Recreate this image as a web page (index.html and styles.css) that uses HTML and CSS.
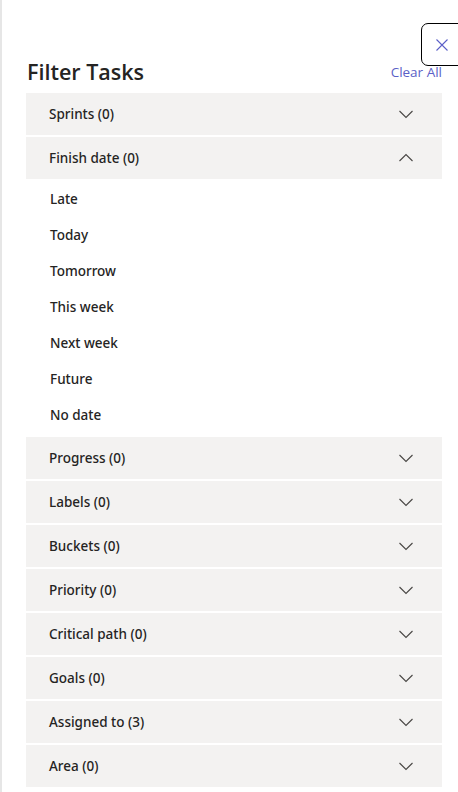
FILE: index.html
```html
<!DOCTYPE html>
<html lang="en">
<head>
<meta charset="utf-8">
<title>Filter Tasks</title>
<link rel="stylesheet" href="styles.css">
</head>
<body>
<div class="panel">
  <button class="close" aria-label="Close">
    <svg width="14" height="14" viewBox="0 0 14 14"><path d="M1.5 1.5 L12.5 12.5 M12.5 1.5 L1.5 12.5" stroke="#5b5fc7" stroke-width="1.1" fill="none"/></svg>
  </button>
  <div class="title-row">
    <h1 class="title">Filter Tasks</h1>
    <a class="clear" href="#">Clear All</a>
  </div>
  <div class="accordion">
    <div class="section">
      <div class="header"><span>Sprints (0)</span><svg class="chev" width="16" height="16" viewBox="0 0 16 16"><path d="M1.5 5 L8 11.5 L14.5 5" stroke="#484644" stroke-width="1.1" fill="none"/></svg></div>
    </div>
    <div class="section open">
      <div class="header"><span>Finish date (0)</span><svg class="chev" width="16" height="16" viewBox="0 0 16 16"><path d="M1.5 11 L8 4.5 L14.5 11" stroke="#484644" stroke-width="1.1" fill="none"/></svg></div>
      <ul class="options">
        <li>Late</li>
        <li>Today</li>
        <li>Tomorrow</li>
        <li>This week</li>
        <li>Next week</li>
        <li>Future</li>
        <li>No date</li>
      </ul>
    </div>
    <div class="section"><div class="header"><span>Progress (0)</span><svg class="chev" width="16" height="16" viewBox="0 0 16 16"><path d="M1.5 5 L8 11.5 L14.5 5" stroke="#484644" stroke-width="1.1" fill="none"/></svg></div></div>
    <div class="section"><div class="header"><span>Labels (0)</span><svg class="chev" width="16" height="16" viewBox="0 0 16 16"><path d="M1.5 5 L8 11.5 L14.5 5" stroke="#484644" stroke-width="1.1" fill="none"/></svg></div></div>
    <div class="section"><div class="header"><span>Buckets (0)</span><svg class="chev" width="16" height="16" viewBox="0 0 16 16"><path d="M1.5 5 L8 11.5 L14.5 5" stroke="#484644" stroke-width="1.1" fill="none"/></svg></div></div>
    <div class="section"><div class="header"><span>Priority (0)</span><svg class="chev" width="16" height="16" viewBox="0 0 16 16"><path d="M1.5 5 L8 11.5 L14.5 5" stroke="#484644" stroke-width="1.1" fill="none"/></svg></div></div>
    <div class="section"><div class="header"><span>Critical path (0)</span><svg class="chev" width="16" height="16" viewBox="0 0 16 16"><path d="M1.5 5 L8 11.5 L14.5 5" stroke="#484644" stroke-width="1.1" fill="none"/></svg></div></div>
    <div class="section"><div class="header"><span>Goals (0)</span><svg class="chev" width="16" height="16" viewBox="0 0 16 16"><path d="M1.5 5 L8 11.5 L14.5 5" stroke="#484644" stroke-width="1.1" fill="none"/></svg></div></div>
    <div class="section"><div class="header"><span>Assigned to (3)</span><svg class="chev" width="16" height="16" viewBox="0 0 16 16"><path d="M1.5 5 L8 11.5 L14.5 5" stroke="#484644" stroke-width="1.1" fill="none"/></svg></div></div>
    <div class="section"><div class="header"><span>Area (0)</span><svg class="chev" width="16" height="16" viewBox="0 0 16 16"><path d="M1.5 5 L8 11.5 L14.5 5" stroke="#484644" stroke-width="1.1" fill="none"/></svg></div></div>
  </div>
</div>
</body>
</html>
```

FILE: styles.css
```css
* { box-sizing: border-box; }
html, body { margin: 0; padding: 0; background: #ffffff; }
body {
  font-family: "Open Sans", "Noto Sans", sans-serif;
  color: #252423;
  overflow: hidden;
}
.panel {
  position: relative;
  height: 792px;
  border-left: 2px solid #e6e6e6;
  padding: 58px 16px 0 24px;
}
.close {
  position: absolute;
  top: 23px;
  left: 419px;
  width: 50px;
  height: 43px;
  border: 1px solid #000000;
  border-radius: 7px;
  background: #ffffff;
  padding: 0 0 0 13px;
  display: flex;
  align-items: center;
  justify-content: flex-start;
}
.title-row {
  display: flex;
  justify-content: space-between;
  align-items: flex-start;
  margin-bottom: 7px;
}
.title {
  margin: 0 0 0 1px;
  font-size: 21.5px;
  line-height: 28px;
  font-weight: 600;
  color: #252423;
}
.clear {
  margin-top: 4px;
  font-size: 13.5px;
  line-height: 20px;
  color: #5b5fc7;
  text-decoration: none;
}
.accordion {
  display: flex;
  flex-direction: column;
  gap: 2px;
}
.header {
  height: 42px;
  background: #f3f2f1;
  display: flex;
  align-items: center;
  justify-content: space-between;
  padding: 0 28px 0 23px;
  font-family: "Noto Sans", "Open Sans", sans-serif;
  font-size: 13.5px;
  font-weight: 500;
}
.chev { display: block; }
.options {
  list-style: none;
  margin: 2px 0 0 0;
  padding: 0 0 2px 24px;
}
.options li {
  height: 36px;
  line-height: 36px;
  font-family: "Noto Sans", "Open Sans", sans-serif;
  font-size: 13.5px;
  font-weight: 500;
}
```
